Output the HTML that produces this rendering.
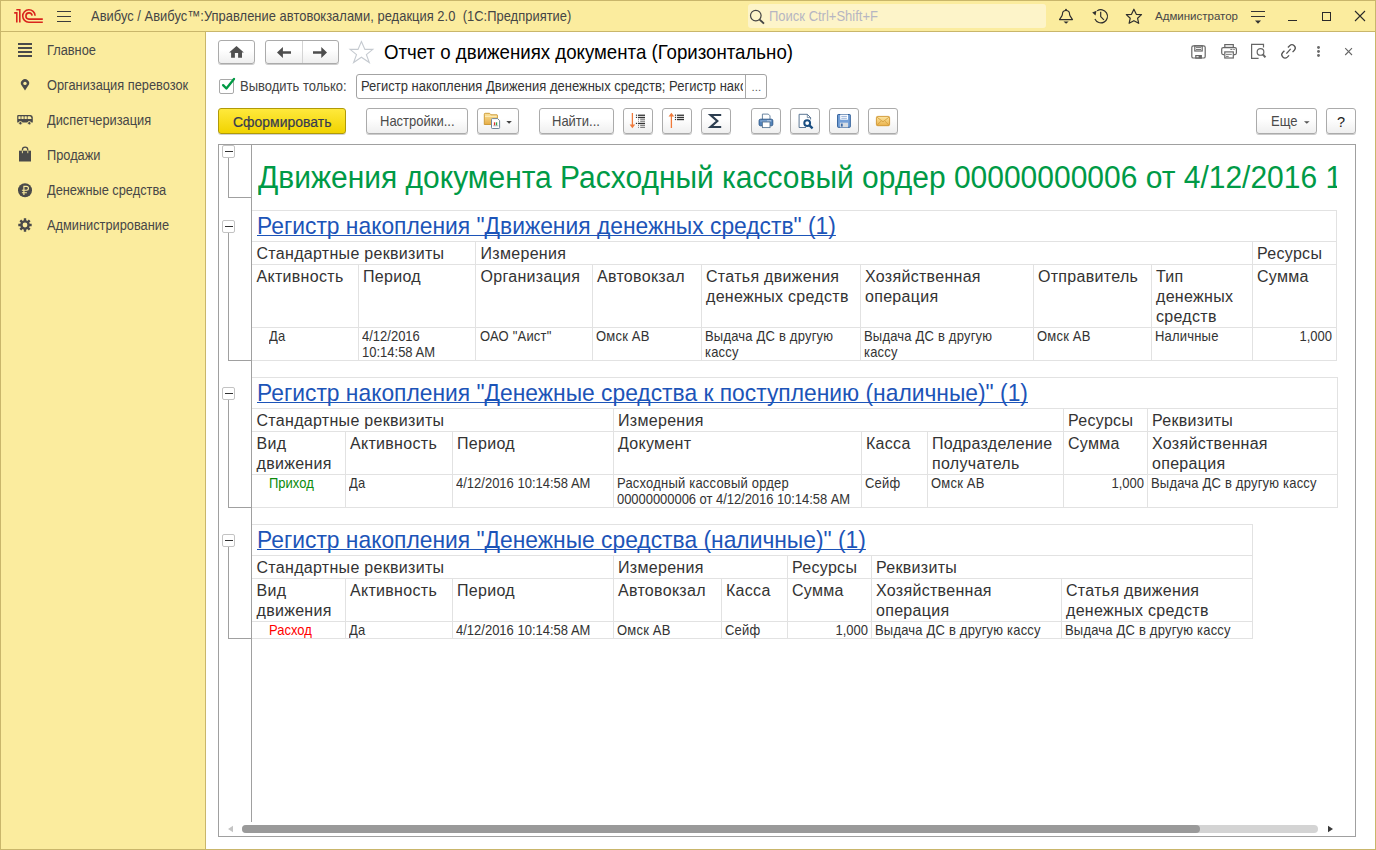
<!DOCTYPE html><html><head><meta charset="utf-8"><style>
html,body{margin:0;padding:0;width:1376px;height:850px;overflow:hidden;background:#fff;}
body{position:relative;font-family:"Liberation Sans",sans-serif;}
.t{position:absolute;white-space:nowrap;}
.r{position:absolute;}
.btn{position:absolute;box-sizing:border-box;border:1px solid #ababab;border-radius:3px;background:linear-gradient(#fff 40%,#efefef);box-shadow:0 1px 0 rgba(0,0,0,0.2);}
svg{position:absolute;overflow:visible;}
</style></head><body>
<div class="r" style="left:0px;top:0px;width:1376px;height:850px;background:#fbec9e;"></div>
<div class="r" style="left:206px;top:32px;width:1169px;height:817px;background:#fff;"></div>
<div class="r" style="left:0px;top:0px;width:1376px;height:1px;background:#c9b66b;"></div>
<div class="r" style="left:0px;top:849px;width:1376px;height:1px;background:#c9b66b;"></div>
<div class="r" style="left:0px;top:0px;width:1px;height:850px;background:#c9b66b;"></div>
<div class="r" style="left:1375px;top:0px;width:1px;height:850px;background:#c9b66b;"></div>
<div class="r" style="left:1px;top:31px;width:1374px;height:1px;background:#c9b66b;"></div>
<div class="r" style="left:205px;top:32px;width:1px;height:817px;background:#c9b66b;"></div>
<svg style="left:0;top:0" width="60" height="32" viewBox="0 0 60 32">
<g fill="none" stroke="#d9251d" stroke-width="1.6">
<path d="M14.2 12.85 H16.8 V22.6 M16.3 9.7 H19.8 V22.6"/>
<path d="M35.1 15.7 A6.2 6.2 0 1 0 28.85 22.2 H42.8"/>
<path d="M32.1 15.7 A3.1 3.1 0 1 0 28.85 19.1 H42.8"/>
</g></svg>
<div class="r" style="left:57px;top:11px;width:14px;height:1.4px;background:#3c3c3c;"></div>
<div class="r" style="left:57px;top:16px;width:14px;height:1.4px;background:#3c3c3c;"></div>
<div class="r" style="left:57px;top:21px;width:14px;height:1.4px;background:#3c3c3c;"></div>
<div class="t " style="left:91px;top:9px;font-size:14.19px;line-height:14.83px;color:#454545;transform:scaleX(0.9091);transform-origin:left 0;letter-spacing:0.04px;">Авибус / Авибус™:Управление автовокзалами, редакция 2.0&nbsp;&nbsp;(1С:Предприятие)</div>
<div class="r" style="left:748px;top:4px;width:298px;height:24px;background:#fdf4c9;border-radius:3px;"></div>
<svg style="left:749px;top:8.5px" width="17" height="17" viewBox="0 0 17 17"><circle cx="6.8" cy="6.6" r="5.3" fill="none" stroke="#444" stroke-width="1.2"/><path d="M10.6 10.6 L15 14.6" stroke="#444" stroke-width="1.9"/></svg><div class="t " style="left:769px;top:9px;font-size:14.30px;line-height:14.95px;color:#b6b6c2;transform:scaleX(0.9091);transform-origin:left 0;">Поиск Ctrl+Shift+F</div>
<svg style="left:1050px;top:0px" width="100" height="32" viewBox="1050 0 100 32"><g fill="none" stroke="#2e2e2e" stroke-width="1.15" stroke-linejoin="round">
<path d="M1059.5 19.6 L1061.9 15.9 Q1062.5 15 1062.5 13.6 Q1062.6 10.5 1066 10.5 Q1069.4 10.5 1069.5 13.6 Q1069.5 15 1070.1 15.9 L1072.5 19.6 Z"/>
<path d="M1094.9 19.1 A6.6 6.6 0 1 0 1097.1 10.9"/>
<path d="M1100.7 11.8 V16.6 L1103.9 19.8" stroke-width="1.2"/>
<path d="M1133.9 9.2 L1136.3 14.3 L1141.5 14.6 L1137.6 18.3 L1138.7 23.3 L1133.9 20.7 L1129.1 23.3 L1130.2 18.3 L1126.3 14.6 L1131.5 14.3 Z" stroke-width="1.2"/>
</g><g fill="#2e2e2e"><circle cx="1066" cy="9.7" r="0.95"/><path d="M1063.5 21.5 H1068.7 L1066.1 23.8 Z"/><path d="M1092.2 12.5 L1096.5 10.8 L1095.5 15.6 Z"/></g></svg><div class="t " style="left:1155px;top:10px;font-size:11.50px;line-height:13.22px;color:#474747;">Администратор</div>
<div class="r" style="left:1251px;top:11px;width:14px;height:1.3px;background:#333;"></div>
<div class="r" style="left:1251px;top:16px;width:14px;height:1.3px;background:#333;"></div>
<svg style="left:1254px;top:20px" width="8" height="5" viewBox="0 0 8 5"><path d="M1 0.5 L7 0.5 L4 3.8 Z" fill="#333"/></svg><div class="r" style="left:1288px;top:19.6px;width:9px;height:1.3px;background:#2a2a2a;"></div>
<div class="r" style="left:1322px;top:12px;width:9px;height:9px;background:transparent;box-sizing:border-box;border:1.5px solid #2a2a2a;"></div>
<svg style="left:1354px;top:10px" width="12" height="12" viewBox="0 0 12 12"><path d="M1 1 L11 11 M11 1 L1 11" stroke="#2a2a2a" stroke-width="1.1"/></svg><div class="t " style="left:47px;top:43px;font-size:14.08px;line-height:14.72px;color:#474747;transform:scaleX(0.9091);transform-origin:left 0;">Главное</div>
<div class="t " style="left:47px;top:78px;font-size:14.08px;line-height:14.72px;color:#474747;transform:scaleX(0.9091);transform-origin:left 0;">Организация перевозок</div>
<div class="t " style="left:47px;top:113px;font-size:14.08px;line-height:14.72px;color:#474747;transform:scaleX(0.9091);transform-origin:left 0;">Диспетчеризация</div>
<div class="t " style="left:47px;top:148px;font-size:14.08px;line-height:14.72px;color:#474747;transform:scaleX(0.9091);transform-origin:left 0;">Продажи</div>
<div class="t " style="left:47px;top:183px;font-size:14.08px;line-height:14.72px;color:#474747;transform:scaleX(0.9091);transform-origin:left 0;">Денежные средства</div>
<div class="t " style="left:47px;top:218px;font-size:14.08px;line-height:14.72px;color:#474747;transform:scaleX(0.9091);transform-origin:left 0;">Администрирование</div>
<div class="r" style="left:18px;top:43.2px;width:14px;height:1.8px;background:#4a4a4a;"></div>
<div class="r" style="left:18px;top:47.2px;width:14px;height:1.8px;background:#4a4a4a;"></div>
<div class="r" style="left:18px;top:51.2px;width:14px;height:1.8px;background:#4a4a4a;"></div>
<div class="r" style="left:18px;top:55.2px;width:14px;height:1.8px;background:#4a4a4a;"></div>
<svg style="left:18px;top:78px" width="14" height="16" viewBox="0 0 14 16"><path d="M7 12.6 L3.7 7.6 A4.1 4.1 0 1 1 10.3 7.6 Z" fill="#4a4a4a"/><circle cx="7" cy="5.4" r="1.7" fill="#fbec9e"/></svg><svg style="left:0px;top:100px" width="40" height="30" viewBox="0 100 40 30"><path d="M17.2 115.9 Q17.2 115 18.1 115 H30.6 Q32.8 115 32.8 117.6 V122.5 H17.2 Z" fill="#4a4a4a"/><g fill="#fbec9e"><rect x="18.4" y="116.3" width="2.2" height="2.8" rx="0.5"/><rect x="21.4" y="116.3" width="2.3" height="2.8" rx="0.5"/><rect x="24.5" y="116.3" width="2.3" height="2.8" rx="0.5"/><path d="M27.6 116.8 Q27.6 116.3 28.1 116.3 H30 Q31.2 116.5 31.6 119.1 H27.6 Z"/></g><g fill="#4a4a4a" stroke="#fbec9e" stroke-width="0.9"><circle cx="20.4" cy="123.2" r="1.7"/><circle cx="29.3" cy="123.2" r="1.7"/></g></svg><svg style="left:0px;top:140px" width="40" height="30" viewBox="0 140 40 30"><rect x="19" y="150.7" width="12" height="10.8" fill="#4a4a4a"/><path d="M22.4 150.7 V149.9 A2.7 2.7 0 0 1 27.8 149.9 V150.7" fill="none" stroke="#4a4a4a" stroke-width="1.3"/><path d="M22.4 150.5 V153.2 M27.8 150.5 V153.2" stroke="#fbec9e" stroke-width="0.9"/></svg><svg style="left:0px;top:180px" width="40" height="20" viewBox="0 180 40 20"><circle cx="25" cy="190.2" r="7" fill="#4a4a4a"/><path d="M23.9 195 V186.3 H26.5 A1.95 1.95 0 0 1 26.5 190.2 H21.9 M21.9 192.7 H26.9" fill="none" stroke="#fbec9e" stroke-width="1.15"/></svg><svg style="left:18px;top:218px" width="14" height="14" viewBox="0 0 14 14"><g fill="#4a4a4a"><circle cx="7" cy="7" r="4.8"/><g stroke="#4a4a4a" stroke-width="2.4"><path d="M7 0.3 V13.7 M0.3 7 H13.7 M2.3 2.3 L11.7 11.7 M11.7 2.3 L2.3 11.7"/></g></g><circle cx="7" cy="7" r="2.4" fill="#fbec9e"/></svg><div class="btn" style="left:218px;top:40px;width:37px;height:24px;"></div>
<svg style="left:214px;top:36px" width="40" height="30" viewBox="214 36 40 30"><path d="M229.1 52.6 L236.5 46 L243.9 52.6 L242 52.6 L242 57.8 L238.1 57.8 L238.1 53 L234.9 53 L234.9 57.8 L231.1 57.8 L231.1 52.6 Z" fill="#505050"/></svg><div class="btn" style="left:265px;top:40px;width:74px;height:24px;"></div>
<div class="r" style="left:302px;top:41px;width:1px;height:22px;background:#d4d4d4;"></div>
<svg style="left:262px;top:36px" width="80" height="30" viewBox="0 0 80 30"><g fill="#4d4d4d"><path d="M15 16.4 L20.9 11 V15.2 H29 V17.7 H20.9 V22 Z"/><path d="M65 16.4 L59.3 11 V15.2 H51 V17.7 H59.3 V22 Z"/></g></svg><svg style="left:344px;top:36px" width="40" height="30" viewBox="344 36 40 30"><path d="M361.4 41.5 L364.9 49.4 L372.8 49.4 L366.4 54.6 L369.3 62.5 L361.4 57.2 L353.6 62.5 L356.5 54.6 L350.1 49.4 L358 49.4 Z" fill="none" stroke="#c5cad0" stroke-width="1.1" stroke-linejoin="miter"/></svg><div class="t " style="left:383.5px;top:42px;font-size:19.79px;line-height:21.47px;color:#000;transform:scaleX(0.9434);transform-origin:left 0;">Отчет о движениях документа (Горизонтально)</div>
<svg style="left:1180px;top:40px" width="180" height="24" viewBox="0 0 180 24"><g fill="none" stroke="#666" stroke-width="1.2">
<rect x="11.8" y="5.8" width="13.4" height="12.2" rx="1.6"/>
<rect x="14.8" y="5.8" width="7.4" height="5.2"/>
<path d="M16 7.6 H21 M16 9.5 H21" stroke-width="0.9"/>
<rect x="15.8" y="15.6" width="5.5" height="2.5"/>
<rect x="44.8" y="4.6" width="8.5" height="2.8"/>
<path d="M44.2 14.6 H43.2 Q41.7 14.6 41.7 13.1 V9.1 Q41.7 7.6 43.2 7.6 H54.9 Q56.4 7.6 56.4 9.1 V13.1 Q56.4 14.6 54.9 14.6 H54"/>
<rect x="44.8" y="11.9" width="8.5" height="6.1" fill="#fff"/>
<path d="M46 14.35 H51.8 M46 16.4 H48.7 M50.3 9.46 H52.4 M53.3 9.46 H54.8" stroke-width="0.9"/>
<path d="M78.6 18.3 H71.6 V4.3 H83.5 V7.6"/>
<circle cx="80.5" cy="11.9" r="3.35"/>
<path d="M82.9 14.3 L85.4 17.4" stroke-width="2"/>
</g>
<rect x="18.6" y="15.6" width="2.7" height="2.5" fill="#666"/>
<g fill="none" stroke="#555" stroke-width="1.3">
<path d="M107.9 7.44 L109.67 5.67 A3.3 3.3 0 0 1 114.33 10.33 L112.56 12.1"/>
<path d="M109.1 15.36 L107.33 17.13 A3.3 3.3 0 0 1 102.67 12.47 L104.44 10.7"/>
<path d="M106.4 13.6 L110.7 8.9"/>
</g>
<g fill="#6a6a6a"><circle cx="138.5" cy="7.45" r="1.45"/><circle cx="138.5" cy="11.45" r="1.45"/><circle cx="138.5" cy="15.45" r="1.45"/></g>
<path d="M165.2 8.2 L172 15 M172 8.2 L165.2 15" stroke="#666" stroke-width="1.1"/>
</svg><div class="r" style="left:219px;top:79px;width:15px;height:15px;background:#fff;box-sizing:border-box;border:1px solid #a9a9a9;border-radius:2px;"></div>
<svg style="left:219px;top:76px" width="16" height="16" viewBox="0 0 16 16"><path d="M4.1 9.1 L7.4 12.5 L15 3" fill="none" stroke="#009a44" stroke-width="2.3" stroke-linecap="round" stroke-linejoin="round"/></svg><div class="t " style="left:240px;top:79px;font-size:14.30px;line-height:14.95px;color:#444;transform:scaleX(0.9091);transform-origin:left 0;">Выводить только:</div>
<div class="r" style="left:356px;top:74px;width:411px;height:25px;background:#fff;box-sizing:border-box;border:1px solid #a3a3a3;border-radius:3px;"></div>
<div class="r" style="left:745px;top:75px;width:1px;height:23px;background:#a8a8a8;"></div>
<div class="t" style="left:357px;top:75px;width:386px;height:23px;overflow:hidden;"><div class="t " style="left:3.5px;top:4px;font-size:14.04px;line-height:14.95px;color:#333;transform:scaleX(0.9259);transform-origin:left 0;">Регистр накопления Движения денежных средств; Регистр накопления Денежные средства</div>
</div>
<div class="t " style="left:751.5px;top:81px;font-size:11.50px;line-height:13.22px;color:#555;">...</div>
<div class="btn" style="left:218px;top:108px;width:128px;height:26px;border-color:#b09a08;background:linear-gradient(#ffe93c,#f1d300);box-shadow:0 1px 0 rgba(0,0,0,0.18)"></div>
<div class="t " style="left:232.5px;top:114px;font-size:14.46px;line-height:15.98px;color:#353a50;transform:scaleX(0.9615);transform-origin:left 0;-webkit-text-stroke:0.2px #353a50;letter-spacing:0.05px;">Сформировать</div>
<div class="btn" style="left:366px;top:108px;width:102px;height:26px;"></div>
<div class="t " style="left:379.5px;top:114px;font-size:14.30px;line-height:14.95px;color:#4a4a4a;transform:scaleX(0.9091);transform-origin:left 0;">Настройки...</div>
<div class="btn" style="left:477px;top:108px;width:42px;height:26px;"></div>
<svg style="left:477px;top:108px" width="42" height="26" viewBox="477 108 42 26">
<defs><linearGradient id="fg" x1="0" y1="0" x2="0" y2="1"><stop offset="0" stop-color="#fbe29a"/><stop offset="1" stop-color="#e6ac45"/></linearGradient></defs>
<path d="M484.3 124.5 V114.2 Q484.3 113.3 485.2 113.3 H489.6 L491 114.8 H497 Q497.4 114.8 497.4 115.3 V124.5 Z" fill="url(#fg)" stroke="#c9952f" stroke-width="0.9"/>
<path d="M485 116.3 H496.8" stroke="#fff3c8" stroke-width="0.9"/>
<path d="M491.5 119.4 Q491.5 118.6 492.3 118.6 H497.6 L499.6 120.6 V127.7 Q499.6 128.5 498.8 128.5 H492.3 Q491.5 128.5 491.5 127.7 Z" fill="#fff" stroke="#6f8599" stroke-width="1"/>
<rect x="493.9" y="122.3" width="1.3" height="3.2" fill="#e0312a"/>
<rect x="495.9" y="122.3" width="1.3" height="3.2" fill="#2fa84f"/>
<path d="M493.2 125.8 H498.3" stroke="#9aa6b2" stroke-width="0.7"/>
<path d="M506.3 121 H511.9 L509.1 123.8 Z" fill="#444"/>
</svg><div class="btn" style="left:539px;top:108px;width:75px;height:26px;"></div>
<div class="t " style="left:552px;top:114px;font-size:14.30px;line-height:14.95px;color:#4a4a4a;transform:scaleX(0.9091);transform-origin:left 0;">Найти...</div>
<div class="btn" style="left:623px;top:108px;width:30px;height:26px;"></div>
<div class="btn" style="left:662px;top:108px;width:30px;height:26px;"></div>
<div class="btn" style="left:701px;top:108px;width:30px;height:26px;"></div>
<div class="btn" style="left:751px;top:108px;width:30px;height:26px;"></div>
<div class="btn" style="left:790px;top:108px;width:30px;height:26px;"></div>
<div class="btn" style="left:829px;top:108px;width:30px;height:26px;"></div>
<div class="btn" style="left:868px;top:108px;width:30px;height:26px;"></div>
<svg style="left:600px;top:100px" width="310" height="40" viewBox="600 100 310 40">
<g fill="none" stroke="#f07a3a" stroke-width="1.3"><path d="M632.4 113 V125.5"/><path d="M671.4 116 V128"/></g>
<path d="M629.6 124.6 H635.2 L632.4 128.2 Z" fill="#f07a3a"/>
<path d="M668.6 116.4 H674.2 L671.4 112.8 Z" fill="#f07a3a"/>
<g fill="#333"><rect x="635.9" y="114.6" width="1.2" height="1.2"/><rect x="635.9" y="116.8" width="1.2" height="1.2"/><rect x="635.9" y="122.8" width="1.2" height="1.2"/>
<rect x="638" y="114.6" width="7" height="1.3"/><rect x="638" y="116.8" width="7" height="1.3"/><rect x="638" y="122.8" width="7" height="1.3"/>
<rect x="674.9" y="114.6" width="1.2" height="1.2"/><rect x="674.9" y="116.8" width="1.2" height="1.2"/><rect x="674.9" y="118.9" width="1.2" height="1.2"/>
<rect x="677" y="114.6" width="7" height="1.3"/><rect x="677" y="116.8" width="7" height="1.3"/><rect x="677" y="118.9" width="7" height="1.3"/></g>
<g fill="#666"><rect x="638.1" y="118.8" width="0.9" height="0.9"/><rect x="638.1" y="120.8" width="0.9" height="0.9"/><rect x="638.1" y="124.9" width="0.9" height="0.9"/><rect x="638.1" y="126.9" width="0.9" height="0.9"/>
<rect x="640.2" y="118.7" width="4.8" height="1"/><rect x="640.2" y="120.7" width="4.8" height="1"/><rect x="640.2" y="124.8" width="4.8" height="1"/><rect x="640.2" y="126.8" width="4.8" height="1"/></g>
<path d="M721.2 115 H710.6 L717.3 121 L710.6 127 H721.2" fill="none" stroke="#2d3e50" stroke-width="2.2" stroke-linejoin="miter"/>
<path d="M762.4 119.5 V114.1 H768.3 L770 115.8 V119.5" fill="#fff" stroke="#5a7896" stroke-width="0.9"/>
<rect x="759.1" y="119.2" width="13.7" height="6.6" rx="1.4" fill="#5283bb" stroke="#2a5585" stroke-width="0.9"/>
<path d="M760.2 121 H771.6" stroke="#a9c4e2" stroke-width="0.8"/>
<rect x="767.4" y="120.4" width="1.2" height="0.9" fill="#fff"/><rect x="769.4" y="120.4" width="1.2" height="0.9" fill="#fff"/>
<rect x="762.4" y="122" width="7.6" height="5.6" fill="#fff" stroke="#5a7896" stroke-width="0.9"/>
<path d="M806 127.5 H799.1 V114.3 H807.3 L810.6 117.6 V119.5" fill="#fff" stroke="#4a6888" stroke-width="0.9"/>
<path d="M807.3 114.3 V117.6 H810.6" fill="none" stroke="#4a6888" stroke-width="0.7"/>
<circle cx="807.2" cy="123.1" r="2.9" fill="#fff" stroke="#1b4f82" stroke-width="2"/>
<path d="M809.4 125.3 L812.6 128.4" stroke="#1b4f82" stroke-width="2.3"/>
<rect x="837.6" y="114.5" width="12.7" height="12.8" rx="0.6" fill="#74a0d8" stroke="#2e5d98" stroke-width="1"/>
<rect x="840.2" y="114.6" width="7.8" height="5.1" fill="#fff"/>
<path d="M841.3 116.4 H846.9 M841.3 118.3 H846.9" stroke="#7f9fcf" stroke-width="0.8"/>
<rect x="839.9" y="122.7" width="8.1" height="4.6" fill="#d7dde3"/>
<rect x="840.9" y="123.6" width="1.8" height="3" fill="#3b6aa8"/>
<defs><linearGradient id="mg" x1="0" y1="0" x2="0" y2="1"><stop offset="0" stop-color="#fde6a4"/><stop offset="1" stop-color="#eab24a"/></linearGradient></defs>
<rect x="876.4" y="116.4" width="13.2" height="9.3" rx="1.3" fill="url(#mg)" stroke="#cf942e" stroke-width="0.9"/>
<path d="M876.8 117 L883 121.8 L889.2 117 M877 125.2 L881.2 121 M889 125.2 L884.8 121" fill="none" stroke="#d09a38" stroke-width="0.8"/>
</svg><div class="btn" style="left:1256px;top:108px;width:61px;height:26px;"></div>
<div class="t " style="left:1270.5px;top:114px;font-size:14.30px;line-height:14.95px;color:#4a4a4a;transform:scaleX(0.9091);transform-origin:left 0;">Еще</div>
<svg style="left:1304px;top:120.6px" width="6" height="4" viewBox="0 0 6 4"><path d="M0 0.2 H5.6 L2.8 2.8 Z" fill="#555"/></svg><div class="btn" style="left:1326px;top:108px;width:30px;height:26px;"></div>
<div class="t " style="left:1337.3px;top:114px;font-size:15.23px;line-height:16.67px;color:#222;transform:scaleX(0.9524);transform-origin:left 0;">?</div>
<div class="r" style="left:218px;top:144px;width:1138px;height:693px;background:#fff;box-sizing:border-box;border:1px solid #a0a0a0;"></div>
<div class="r" style="left:251px;top:145px;width:1px;height:677px;background:#a0a0a0;"></div>
<div class="r" style="left:222px;top:145px;width:13px;height:13px;background:#fff;box-sizing:border-box;border:1px solid #c3c3c3;border-radius:2px;"></div>
<div class="r" style="left:224.5px;top:151px;width:8px;height:1.2px;background:#333;"></div>
<div class="r" style="left:228px;top:158px;width:1px;height:40px;background:#a0a0a0;"></div>
<div class="r" style="left:228px;top:197px;width:23px;height:1px;background:#a0a0a0;"></div>
<div class="r" style="left:222px;top:220px;width:13px;height:13px;background:#fff;box-sizing:border-box;border:1px solid #c3c3c3;border-radius:2px;"></div>
<div class="r" style="left:224.5px;top:226px;width:8px;height:1.2px;background:#333;"></div>
<div class="r" style="left:228px;top:233px;width:1px;height:128px;background:#a0a0a0;"></div>
<div class="r" style="left:228px;top:360px;width:23px;height:1px;background:#a0a0a0;"></div>
<div class="r" style="left:222px;top:387px;width:13px;height:13px;background:#fff;box-sizing:border-box;border:1px solid #c3c3c3;border-radius:2px;"></div>
<div class="r" style="left:224.5px;top:393px;width:8px;height:1.2px;background:#333;"></div>
<div class="r" style="left:228px;top:400px;width:1px;height:108px;background:#a0a0a0;"></div>
<div class="r" style="left:228px;top:507px;width:23px;height:1px;background:#a0a0a0;"></div>
<div class="r" style="left:222px;top:534px;width:13px;height:13px;background:#fff;box-sizing:border-box;border:1px solid #c3c3c3;border-radius:2px;"></div>
<div class="r" style="left:224.5px;top:540px;width:8px;height:1.2px;background:#333;"></div>
<div class="r" style="left:228px;top:547px;width:1px;height:92px;background:#a0a0a0;"></div>
<div class="r" style="left:228px;top:638px;width:23px;height:1px;background:#a0a0a0;"></div>
<div class="t" style="left:252px;top:150px;width:1085px;height:50px;overflow:hidden;"><div class="t " style="left:6px;top:9px;font-size:32.10px;line-height:36px;color:#009a46;transform:scaleX(0.9346);transform-origin:left 0;">Движения документа Расходный кассовый ордер 00000000006 от 4/12/2016 10:14:58 AM</div>
</div>
<div class="r" style="left:252px;top:210px;width:1085px;height:1px;background:#e2e2e2;"></div>
<div class="r" style="left:252px;top:241px;width:1085px;height:1px;background:#e2e2e2;"></div>
<div class="r" style="left:252px;top:264px;width:1085px;height:1px;background:#e2e2e2;"></div>
<div class="r" style="left:252px;top:327px;width:1085px;height:1px;background:#e2e2e2;"></div>
<div class="r" style="left:252px;top:360px;width:1085px;height:1px;background:#e2e2e2;"></div>
<div class="r" style="left:358px;top:264px;width:1px;height:97px;background:#e2e2e2;"></div>
<div class="r" style="left:475px;top:241px;width:1px;height:120px;background:#e2e2e2;"></div>
<div class="r" style="left:592px;top:264px;width:1px;height:97px;background:#e2e2e2;"></div>
<div class="r" style="left:701px;top:264px;width:1px;height:97px;background:#e2e2e2;"></div>
<div class="r" style="left:860px;top:264px;width:1px;height:97px;background:#e2e2e2;"></div>
<div class="r" style="left:1033px;top:264px;width:1px;height:97px;background:#e2e2e2;"></div>
<div class="r" style="left:1151px;top:264px;width:1px;height:97px;background:#e2e2e2;"></div>
<div class="r" style="left:1252px;top:241px;width:1px;height:120px;background:#e2e2e2;"></div>
<div class="r" style="left:1336px;top:210px;width:1px;height:151px;background:#e2e2e2;"></div>
<div class="t " style="left:257px;top:213px;font-size:24.19px;line-height:26.24px;color:#1c54b8;transform:scaleX(0.9434);transform-origin:left 0;text-decoration:underline;text-decoration-skip-ink:none;text-underline-offset:1px;text-decoration-thickness:1px;">Регистр накопления "Движения денежных средств" (1)</div>
<div class="t " style="left:256.5px;top:245px;font-size:16.00px;line-height:18.4px;color:#333;letter-spacing:0.3px;">Стандартные реквизиты</div>
<div class="t " style="left:480.5px;top:245px;font-size:16.00px;line-height:18.4px;color:#333;letter-spacing:0.3px;">Измерения</div>
<div class="t " style="left:1257px;top:245px;font-size:16.00px;line-height:18.4px;color:#333;letter-spacing:0.3px;">Ресурсы</div>
<div class="t " style="left:256.5px;top:267px;font-size:16.00px;line-height:20px;color:#333;letter-spacing:0.3px;">Активность</div>
<div class="t " style="left:363px;top:267px;font-size:16.00px;line-height:20px;color:#333;letter-spacing:0.3px;">Период</div>
<div class="t " style="left:480.5px;top:267px;font-size:16.00px;line-height:20px;color:#333;letter-spacing:0.3px;">Организация</div>
<div class="t " style="left:597px;top:267px;font-size:16.00px;line-height:20px;color:#333;letter-spacing:0.3px;">Автовокзал</div>
<div class="t " style="left:706px;top:267px;font-size:16.00px;line-height:20px;color:#333;letter-spacing:0.3px;">Статья движения<br>денежных средств</div>
<div class="t " style="left:865px;top:267px;font-size:16.00px;line-height:20px;color:#333;letter-spacing:0.3px;">Хозяйственная<br>операция</div>
<div class="t " style="left:1038px;top:267px;font-size:16.00px;line-height:20px;color:#333;letter-spacing:0.3px;">Отправитель</div>
<div class="t " style="left:1156px;top:267px;font-size:16.00px;line-height:20px;color:#333;letter-spacing:0.3px;">Тип<br>денежных<br>средств</div>
<div class="t " style="left:1257px;top:267px;font-size:16.00px;line-height:20px;color:#333;letter-spacing:0.3px;">Сумма</div>
<div class="t " style="left:269px;top:328px;font-size:14.30px;line-height:16px;color:#333;transform:scaleX(0.9091);transform-origin:left 0;letter-spacing:0.22px;">Да</div>
<div class="t " style="left:362px;top:328px;font-size:14.30px;line-height:16px;color:#333;transform:scaleX(0.9091);transform-origin:left 0;">4/12/2016<br>10:14:58 AM</div>
<div class="t " style="left:479.5px;top:328px;font-size:14.30px;line-height:16px;color:#333;transform:scaleX(0.9091);transform-origin:left 0;letter-spacing:0.22px;">ОАО "Аист"</div>
<div class="t " style="left:596px;top:328px;font-size:14.30px;line-height:16px;color:#333;transform:scaleX(0.9091);transform-origin:left 0;letter-spacing:0.22px;">Омск АВ</div>
<div class="t " style="left:705px;top:328px;font-size:14.30px;line-height:16px;color:#333;transform:scaleX(0.9091);transform-origin:left 0;letter-spacing:0.22px;">Выдача ДС в другую<br>кассу</div>
<div class="t " style="left:864px;top:328px;font-size:14.30px;line-height:16px;color:#333;transform:scaleX(0.9091);transform-origin:left 0;letter-spacing:0.22px;">Выдача ДС в другую<br>кассу</div>
<div class="t " style="left:1037px;top:328px;font-size:14.30px;line-height:16px;color:#333;transform:scaleX(0.9091);transform-origin:left 0;letter-spacing:0.22px;">Омск АВ</div>
<div class="t " style="left:1155px;top:328px;font-size:14.30px;line-height:16px;color:#333;transform:scaleX(0.9091);transform-origin:left 0;letter-spacing:0.22px;">Наличные</div>
<div class="t " style="left:1232px;top:328px;font-size:14.30px;line-height:16px;color:#333;transform:scaleX(0.9091);transform-origin:right 0;width:100px;text-align:right;">1,000</div>
<div class="r" style="left:252px;top:377px;width:1086px;height:1px;background:#e2e2e2;"></div>
<div class="r" style="left:252px;top:408px;width:1086px;height:1px;background:#e2e2e2;"></div>
<div class="r" style="left:252px;top:431px;width:1086px;height:1px;background:#e2e2e2;"></div>
<div class="r" style="left:252px;top:474px;width:1086px;height:1px;background:#e2e2e2;"></div>
<div class="r" style="left:252px;top:507px;width:1086px;height:1px;background:#e2e2e2;"></div>
<div class="r" style="left:345px;top:431px;width:1px;height:77px;background:#e2e2e2;"></div>
<div class="r" style="left:452px;top:431px;width:1px;height:77px;background:#e2e2e2;"></div>
<div class="r" style="left:613px;top:408px;width:1px;height:100px;background:#e2e2e2;"></div>
<div class="r" style="left:861px;top:431px;width:1px;height:77px;background:#e2e2e2;"></div>
<div class="r" style="left:927px;top:431px;width:1px;height:77px;background:#e2e2e2;"></div>
<div class="r" style="left:1063px;top:408px;width:1px;height:100px;background:#e2e2e2;"></div>
<div class="r" style="left:1147px;top:408px;width:1px;height:100px;background:#e2e2e2;"></div>
<div class="r" style="left:1337px;top:377px;width:1px;height:131px;background:#e2e2e2;"></div>
<div class="t " style="left:257px;top:380px;font-size:24.19px;line-height:26.24px;color:#1c54b8;transform:scaleX(0.9434);transform-origin:left 0;text-decoration:underline;text-decoration-skip-ink:none;text-underline-offset:1px;text-decoration-thickness:1px;">Регистр накопления "Денежные средства к поступлению (наличные)" (1)</div>
<div class="t " style="left:256.5px;top:412px;font-size:16.00px;line-height:18.4px;color:#333;letter-spacing:0.3px;">Стандартные реквизиты</div>
<div class="t " style="left:618px;top:412px;font-size:16.00px;line-height:18.4px;color:#333;letter-spacing:0.3px;">Измерения</div>
<div class="t " style="left:1068px;top:412px;font-size:16.00px;line-height:18.4px;color:#333;letter-spacing:0.3px;">Ресурсы</div>
<div class="t " style="left:1152px;top:412px;font-size:16.00px;line-height:18.4px;color:#333;letter-spacing:0.3px;">Реквизиты</div>
<div class="t " style="left:256.5px;top:434px;font-size:16.00px;line-height:20px;color:#333;letter-spacing:0.3px;">Вид<br>движения</div>
<div class="t " style="left:350px;top:434px;font-size:16.00px;line-height:20px;color:#333;letter-spacing:0.3px;">Активность</div>
<div class="t " style="left:457px;top:434px;font-size:16.00px;line-height:20px;color:#333;letter-spacing:0.3px;">Период</div>
<div class="t " style="left:618px;top:434px;font-size:16.00px;line-height:20px;color:#333;letter-spacing:0.3px;">Документ</div>
<div class="t " style="left:866px;top:434px;font-size:16.00px;line-height:20px;color:#333;letter-spacing:0.3px;">Касса</div>
<div class="t " style="left:932px;top:434px;font-size:16.00px;line-height:20px;color:#333;letter-spacing:0.3px;">Подразделение<br>получатель</div>
<div class="t " style="left:1068px;top:434px;font-size:16.00px;line-height:20px;color:#333;letter-spacing:0.3px;">Сумма</div>
<div class="t " style="left:1152px;top:434px;font-size:16.00px;line-height:20px;color:#333;letter-spacing:0.3px;">Хозяйственная<br>операция</div>
<div class="t " style="left:269px;top:475px;font-size:14.30px;line-height:16px;color:#0b8a0b;transform:scaleX(0.9091);transform-origin:left 0;">Приход</div>
<div class="t " style="left:349px;top:475px;font-size:14.30px;line-height:16px;color:#333;transform:scaleX(0.9091);transform-origin:left 0;letter-spacing:0.22px;">Да</div>
<div class="t " style="left:456px;top:475px;font-size:14.30px;line-height:16px;color:#333;transform:scaleX(0.9091);transform-origin:left 0;">4/12/2016 10:14:58 AM</div>
<div class="t " style="left:617px;top:475px;font-size:14.30px;line-height:16px;color:#333;transform:scaleX(0.9091);transform-origin:left 0;letter-spacing:0.22px;">Расходный кассовый ордер</div>
<div class="t " style="left:865px;top:475px;font-size:14.30px;line-height:16px;color:#333;transform:scaleX(0.9091);transform-origin:left 0;letter-spacing:0.22px;">Сейф</div>
<div class="t " style="left:931px;top:475px;font-size:14.30px;line-height:16px;color:#333;transform:scaleX(0.9091);transform-origin:left 0;letter-spacing:0.22px;">Омск АВ</div>
<div class="t " style="left:1151px;top:475px;font-size:14.30px;line-height:16px;color:#333;transform:scaleX(0.9091);transform-origin:left 0;letter-spacing:0.22px;">Выдача ДС в другую кассу</div>
<div class="t " style="left:617px;top:491px;font-size:14.30px;line-height:16px;color:#333;transform:scaleX(0.9091);transform-origin:left 0;letter-spacing:-0.05px;">00000000006 от 4/12/2016 10:14:58 AM</div>
<div class="t " style="left:1044px;top:475px;font-size:14.30px;line-height:16px;color:#333;transform:scaleX(0.9091);transform-origin:right 0;width:100px;text-align:right;">1,000</div>
<div class="r" style="left:252px;top:524px;width:1001px;height:1px;background:#e2e2e2;"></div>
<div class="r" style="left:252px;top:555px;width:1001px;height:1px;background:#e2e2e2;"></div>
<div class="r" style="left:252px;top:578px;width:1001px;height:1px;background:#e2e2e2;"></div>
<div class="r" style="left:252px;top:621px;width:1001px;height:1px;background:#e2e2e2;"></div>
<div class="r" style="left:252px;top:638px;width:1001px;height:1px;background:#e2e2e2;"></div>
<div class="r" style="left:345px;top:578px;width:1px;height:61px;background:#e2e2e2;"></div>
<div class="r" style="left:452px;top:578px;width:1px;height:61px;background:#e2e2e2;"></div>
<div class="r" style="left:613px;top:555px;width:1px;height:84px;background:#e2e2e2;"></div>
<div class="r" style="left:721px;top:578px;width:1px;height:61px;background:#e2e2e2;"></div>
<div class="r" style="left:787px;top:555px;width:1px;height:84px;background:#e2e2e2;"></div>
<div class="r" style="left:871px;top:555px;width:1px;height:84px;background:#e2e2e2;"></div>
<div class="r" style="left:1061px;top:578px;width:1px;height:61px;background:#e2e2e2;"></div>
<div class="r" style="left:1252px;top:524px;width:1px;height:115px;background:#e2e2e2;"></div>
<div class="t " style="left:257px;top:527px;font-size:24.19px;line-height:26.24px;color:#1c54b8;transform:scaleX(0.9434);transform-origin:left 0;text-decoration:underline;text-decoration-skip-ink:none;text-underline-offset:1px;text-decoration-thickness:1px;">Регистр накопления "Денежные средства (наличные)" (1)</div>
<div class="t " style="left:256.5px;top:559px;font-size:16.00px;line-height:18.4px;color:#333;letter-spacing:0.3px;">Стандартные реквизиты</div>
<div class="t " style="left:618px;top:559px;font-size:16.00px;line-height:18.4px;color:#333;letter-spacing:0.3px;">Измерения</div>
<div class="t " style="left:792px;top:559px;font-size:16.00px;line-height:18.4px;color:#333;letter-spacing:0.3px;">Ресурсы</div>
<div class="t " style="left:876px;top:559px;font-size:16.00px;line-height:18.4px;color:#333;letter-spacing:0.3px;">Реквизиты</div>
<div class="t " style="left:256.5px;top:581px;font-size:16.00px;line-height:20px;color:#333;letter-spacing:0.3px;">Вид<br>движения</div>
<div class="t " style="left:350px;top:581px;font-size:16.00px;line-height:20px;color:#333;letter-spacing:0.3px;">Активность</div>
<div class="t " style="left:457px;top:581px;font-size:16.00px;line-height:20px;color:#333;letter-spacing:0.3px;">Период</div>
<div class="t " style="left:618px;top:581px;font-size:16.00px;line-height:20px;color:#333;letter-spacing:0.3px;">Автовокзал</div>
<div class="t " style="left:726px;top:581px;font-size:16.00px;line-height:20px;color:#333;letter-spacing:0.3px;">Касса</div>
<div class="t " style="left:792px;top:581px;font-size:16.00px;line-height:20px;color:#333;letter-spacing:0.3px;">Сумма</div>
<div class="t " style="left:876px;top:581px;font-size:16.00px;line-height:20px;color:#333;letter-spacing:0.3px;">Хозяйственная<br>операция</div>
<div class="t " style="left:1066px;top:581px;font-size:16.00px;line-height:20px;color:#333;letter-spacing:0.3px;">Статья движения<br>денежных средств</div>
<div class="t " style="left:269px;top:622px;font-size:14.30px;line-height:16px;color:#ff0000;transform:scaleX(0.9091);transform-origin:left 0;">Расход</div>
<div class="t " style="left:349px;top:622px;font-size:14.30px;line-height:16px;color:#333;transform:scaleX(0.9091);transform-origin:left 0;letter-spacing:0.22px;">Да</div>
<div class="t " style="left:456px;top:622px;font-size:14.30px;line-height:16px;color:#333;transform:scaleX(0.9091);transform-origin:left 0;">4/12/2016 10:14:58 AM</div>
<div class="t " style="left:617px;top:622px;font-size:14.30px;line-height:16px;color:#333;transform:scaleX(0.9091);transform-origin:left 0;letter-spacing:0.22px;">Омск АВ</div>
<div class="t " style="left:725px;top:622px;font-size:14.30px;line-height:16px;color:#333;transform:scaleX(0.9091);transform-origin:left 0;letter-spacing:0.22px;">Сейф</div>
<div class="t " style="left:875px;top:622px;font-size:14.30px;line-height:16px;color:#333;transform:scaleX(0.9091);transform-origin:left 0;letter-spacing:0.22px;">Выдача ДС в другую кассу</div>
<div class="t " style="left:1065px;top:622px;font-size:14.30px;line-height:16px;color:#333;transform:scaleX(0.9091);transform-origin:left 0;letter-spacing:0.22px;">Выдача ДС в другую кассу</div>
<div class="t " style="left:768px;top:622px;font-size:14.30px;line-height:16px;color:#333;transform:scaleX(0.9091);transform-origin:right 0;width:100px;text-align:right;">1,000</div>
<div class="r" style="left:242px;top:825px;width:1076px;height:8px;background:#d4d4d4;border-radius:4px;"></div>
<div class="r" style="left:242px;top:825px;width:958px;height:8px;background:#9a9a9a;border-radius:4px;"></div>
<svg style="left:227px;top:825px" width="7" height="8" viewBox="0 0 7 8"><path d="M1 4 L6 0.8 L6 7.2 Z" fill="#c4c4c4"/></svg><svg style="left:1327px;top:825px" width="7" height="8" viewBox="0 0 7 8"><path d="M6 4 L1 0.8 L1 7.2 Z" fill="#3a3a3a"/></svg></body></html>
